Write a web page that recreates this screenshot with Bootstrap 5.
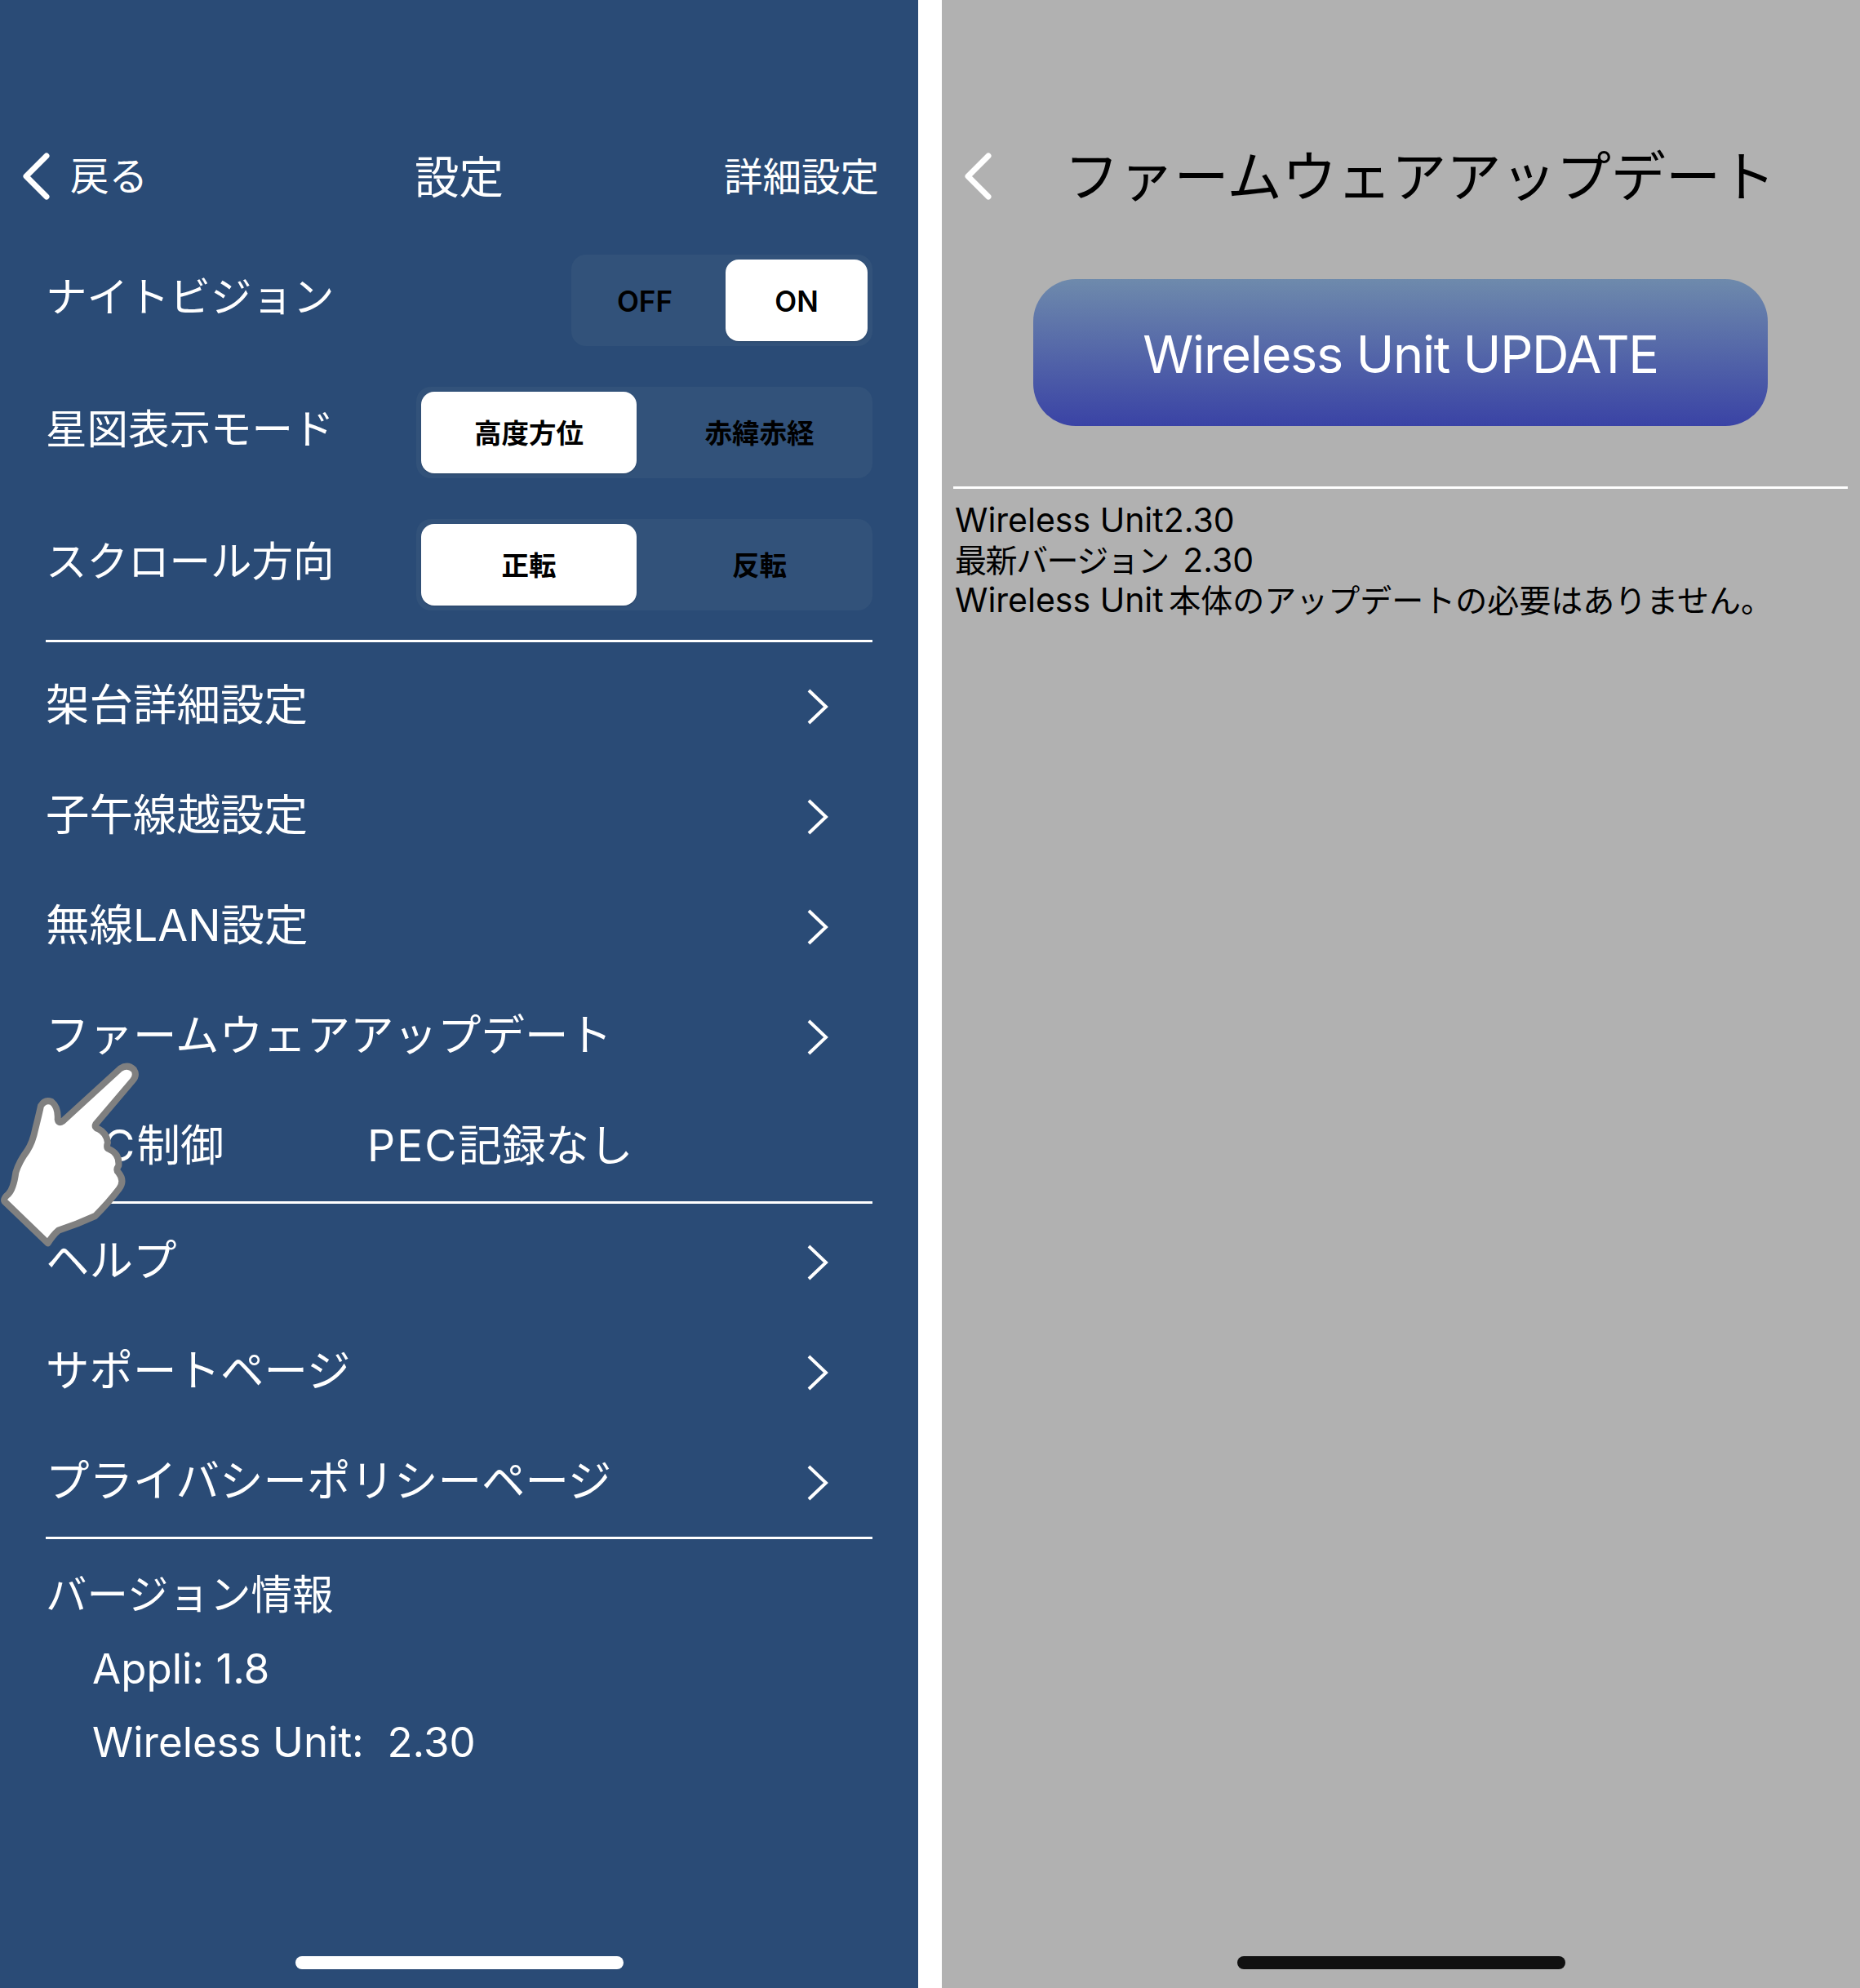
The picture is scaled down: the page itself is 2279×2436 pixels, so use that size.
<!DOCTYPE html>
<html lang="ja">
<head>
<meta charset="utf-8">
<title>設定</title>
<link href="https://cdn.jsdelivr.net/npm/bootstrap@5.3.0/dist/css/bootstrap.min.css" rel="stylesheet">
<style>
html,body{margin:0;height:2436px;background:#fff;overflow:hidden}
body{font-family:Inter,"Noto Sans CJK JP",sans-serif;font-weight:400}
.shots{width:2279px;height:2436px;gap:29px}
.pane{width:1125px;height:2436px;position:relative}
.pane-set{background:#2a4b76;color:#fff;padding-top:160px}
.pane-fw{background:#b1b1b1;color:#000;padding-top:160px}
.topbar{height:112px;position:relative}
.back-lnk{font-size:47.5px;color:#fff;padding-left:26px;gap:24px}
.top-title{font-size:54.5px;position:absolute;left:0;right:0;top:22px;text-align:center;line-height:70px;margin:0;font-weight:400}
.top-right{font-size:47.5px;position:absolute;right:48px;top:27px;line-height:60px;margin:0}
.seg-rows{padding:40px 56px 0 56px;gap:50px}
.seg-row{height:112px}
.seg-lbl{font-size:50.5px;line-height:60px;margin-top:-8px}
.seg-box{background:#32527a;border-radius:18px;padding:6px;height:112px}
.seg-box .btn{border:0;margin-left:0!important;border-radius:16px!important;font-size:33.5px;font-weight:600;color:#000;height:100px;line-height:102px;padding:0;font-family:Inter,"Noto Sans CJK JP",sans-serif}
.seg-box .btn.is-on{background:#fff;box-shadow:0 1px 2px rgba(0,0,0,.15)}
.seg-wide .btn{width:264px}
.seg-wide .btn:last-child{width:283px;padding-left:18px}
.seg-short .btn{font-size:35px}
.seg-short .btn:first-child{width:168px;margin-right:15px}
.seg-short .btn.is-on{width:174px}
.rule{height:3px;background:#fff;margin:0 56px;opacity:1;border:0}
.menu-lst{padding:10px 56px 0 56px}
.menu-lst2{padding:3px 56px 0 56px}
.menu-itm{height:135px;background:transparent;border:0;color:#fff;font-size:53.5px;padding:0;font-weight:400}
.menu-itm svg{margin-right:52px;margin-top:2px}
.pec-tag{letter-spacing:2px}
.pec-val{position:absolute;left:394px}
.ver-block{padding:36px 56px 0}
.ver-head{font-size:50.5px;line-height:64px;margin-bottom:14px}
.ver-line{font-size:51px;line-height:90px;padding-left:57px}
.home-bar{position:absolute;left:362px;bottom:23px;width:402px;height:16px;border-radius:8px;background:#fff}
.home-dark{background:#111}
.hand-svg{position:absolute;left:0;top:1240px;width:200px;height:320px}
.fw-chev{position:absolute;left:26px;top:26px}
.fw-title{font-size:67.2px;line-height:90px;position:absolute;left:150px;top:12px;margin:0;font-weight:400;white-space:nowrap}
.upd-btn{display:block;width:900px;height:180px;margin:70px 0 0 112px;border:0;border-radius:52px;background:linear-gradient(#6e8aac,#3a43a5);color:#fff;font-size:63px;letter-spacing:-1.3px;font-weight:400;padding:4px 0 0}
.fw-rule{height:3px;background:#fff;margin:74px 15px 0 14px}
.fw-text{margin:14px 0 0 16px;font-size:41px;line-height:49px}
.jp-tight{font-size:39px;letter-spacing:-1.5px;margin-right:6px}
.jp-wide{font-size:39px;margin-left:-5px}
</style>
</head>
<body>
<div class="shots d-flex">
  <div class="pane pane-set">
    <div class="topbar">
      <div class="back-lnk d-flex align-items-center h-100">
        <svg width="36" height="60" viewBox="0 0 36 60"><path d="M31 5 6 30l25 25" fill="none" stroke="#fff" stroke-width="7" stroke-linecap="round" stroke-linejoin="round"/></svg>
        <span>戻る</span>
      </div>
      <h1 class="top-title">設定</h1>
      <p class="top-right">詳細設定</p>
    </div>
    <div class="seg-rows d-flex flex-column">
      <div class="seg-row d-flex justify-content-between align-items-center">
        <div class="seg-lbl">ナイトビジョン</div>
        <div class="seg-box seg-short btn-group"><button class="btn">OFF</button><button class="btn is-on">ON</button></div>
      </div>
      <div class="seg-row d-flex justify-content-between align-items-center">
        <div class="seg-lbl">星図表示モード</div>
        <div class="seg-box seg-wide btn-group"><button class="btn is-on">高度方位</button><button class="btn">赤緯赤経</button></div>
      </div>
      <div class="seg-row d-flex justify-content-between align-items-center">
        <div class="seg-lbl">スクロール方向</div>
        <div class="seg-box seg-wide btn-group"><button class="btn is-on">正転</button><button class="btn">反転</button></div>
      </div>
    </div>
    <hr class="rule" style="margin-top:36px;margin-bottom:0">
    <div class="menu-lst list-group list-group-flush">
      <div class="menu-itm list-group-item d-flex justify-content-between align-items-center">架台詳細設定<svg width="32" height="46" viewBox="0 0 32 46"><path d="M6 3l21 20L6 43" fill="none" stroke="#fff" stroke-width="4"/></svg></div>
      <div class="menu-itm list-group-item d-flex justify-content-between align-items-center">子午線越設定<svg width="32" height="46" viewBox="0 0 32 46"><path d="M6 3l21 20L6 43" fill="none" stroke="#fff" stroke-width="4"/></svg></div>
      <div class="menu-itm list-group-item d-flex justify-content-between align-items-center">無線LAN設定<svg width="32" height="46" viewBox="0 0 32 46"><path d="M6 3l21 20L6 43" fill="none" stroke="#fff" stroke-width="4"/></svg></div>
      <div class="menu-itm list-group-item d-flex justify-content-between align-items-center">ファームウェアアップデート<svg width="32" height="46" viewBox="0 0 32 46"><path d="M6 3l21 20L6 43" fill="none" stroke="#fff" stroke-width="4"/></svg></div>
      <div class="menu-itm list-group-item d-flex align-items-center"><span><span class="pec-tag">PEC</span>制御</span><span class="pec-val"><span class="pec-tag">PEC</span>記録なし</span></div>
    </div>
    <hr class="rule" style="margin-top:0;margin-bottom:0">
    <div class="menu-lst2 list-group list-group-flush">
      <div class="menu-itm list-group-item d-flex justify-content-between align-items-center">ヘルプ<svg width="32" height="46" viewBox="0 0 32 46"><path d="M6 3l21 20L6 43" fill="none" stroke="#fff" stroke-width="4"/></svg></div>
      <div class="menu-itm list-group-item d-flex justify-content-between align-items-center">サポートページ<svg width="32" height="46" viewBox="0 0 32 46"><path d="M6 3l21 20L6 43" fill="none" stroke="#fff" stroke-width="4"/></svg></div>
      <div class="menu-itm list-group-item d-flex justify-content-between align-items-center">プライバシーポリシーページ<svg width="32" height="46" viewBox="0 0 32 46"><path d="M6 3l21 20L6 43" fill="none" stroke="#fff" stroke-width="4"/></svg></div>
    </div>
    <hr class="rule" style="margin-top:0;margin-bottom:0">
    <div class="ver-block">
      <div class="ver-head">バージョン情報</div>
      <div class="ver-line">Appli: 1.8</div>
      <div class="ver-line">Wireless Unit:&nbsp; 2.30</div>
    </div>
    <div class="home-bar"></div>
    <svg class="hand-svg" viewBox="0 0 600 960"><path d="M442 208Q470 190 492 212Q505 232 488 252L352 412Q345 425 362 430Q392 445 396 480Q390 498 398 503Q440 520 436 565Q425 580 435 590Q460 620 438 650Q400 700 350 750Q285 780 215 803Q195 820 176 850L16 696Q12 685 30 670Q50 650 58 590Q70 550 100 510Q120 480 130 430Q145 370 150 345Q165 320 190 330Q215 350 212 395Q215 412 230 402Z" fill="#fff" stroke="#808080" stroke-width="24" stroke-linejoin="round"/></svg>
  </div>
  <div class="pane pane-fw">
    <div class="topbar">
      <svg class="fw-chev" width="36" height="60" viewBox="0 0 36 60"><path d="M31 5 6 30l25 25" fill="none" stroke="#fff" stroke-width="7" stroke-linecap="round" stroke-linejoin="round"/></svg>
      <h2 class="fw-title">ファームウェアアップデート</h2>
    </div>
    <button class="upd-btn btn">Wireless Unit UPDATE</button>
    <div class="fw-rule"></div>
    <div class="fw-text">
      <div>Wireless Unit2.30</div>
      <div><span class="jp-tight">最新バージョン</span> 2.30</div>
      <div>Wireless Unit <span class="jp-wide">本体のアップデートの必要はありません。</span></div>
    </div>
    <div class="home-bar home-dark"></div>
  </div>
</div>
</body>
</html>
